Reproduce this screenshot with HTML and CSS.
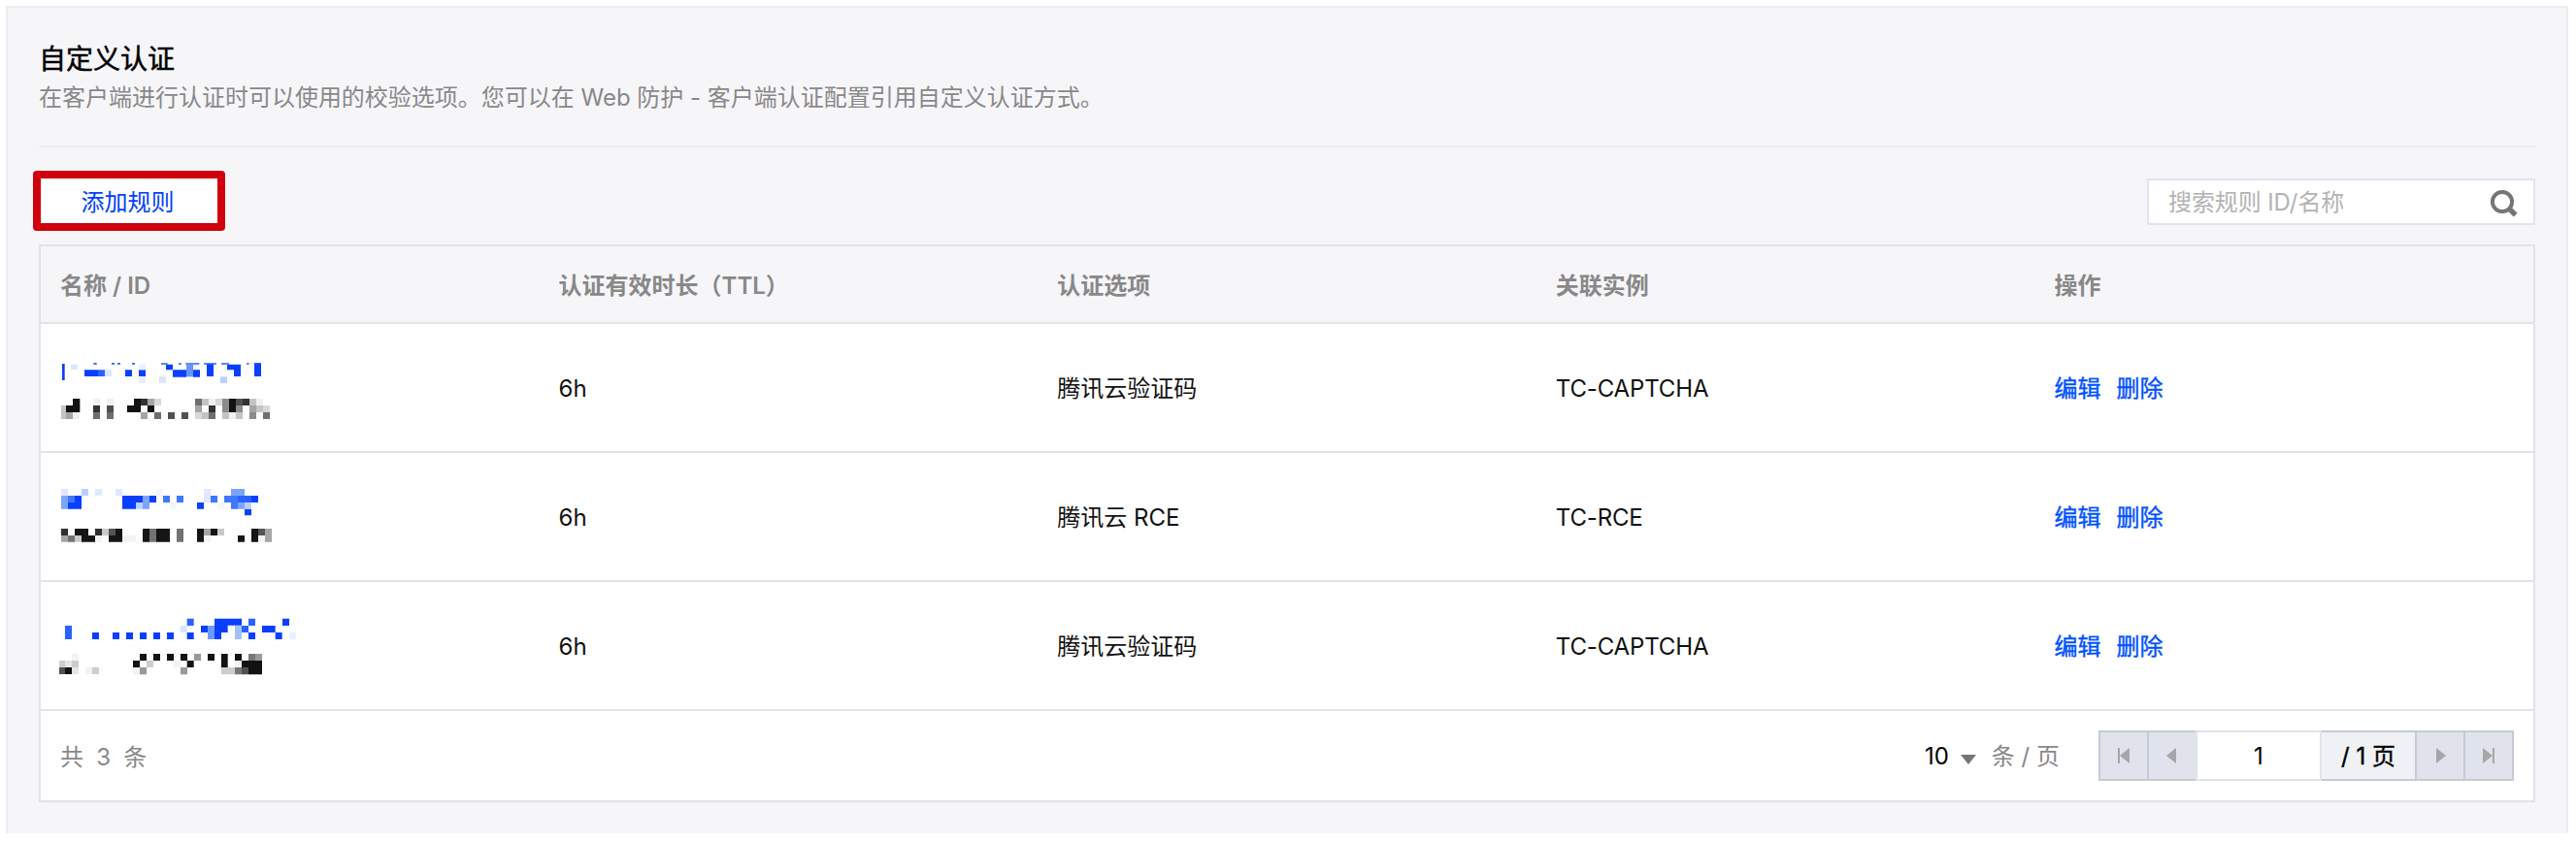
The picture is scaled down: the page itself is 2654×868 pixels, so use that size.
FILE: index.html
```html
<!DOCTYPE html>
<html lang="zh-CN">
<head>
<meta charset="utf-8">
<title>自定义认证</title>
<link rel="stylesheet" href="styles.css">
</head>
<body>
<section class="panel">
  <header class="panel-head">
    <h1 class="title">自定义认证</h1>
    <p class="subtitle">在客户端进行认证时可以使用的校验选项。您可以在 <span class="web">Web</span> 防护 <span class="dash">-</span> 客户端认证配置引用自定义认证方式。</p>
  </header>
  <div class="toolbar">
    <button class="add" type="button"><span class="add-label">添加规则</span></button>
    <div class="search">
      <span class="placeholder">搜索规则 ID/名称</span>
      <svg class="search-icon" viewBox="0 0 28 28"><circle cx="12" cy="12" r="10.1" fill="none" stroke="#757575" stroke-width="4"/><path d="M18.5 18.5l7.2 7.2" stroke="#757575" stroke-width="5.4"/></svg>
    </div>
  </div>
  <div class="table">
    <div class="row head">
      <div class="cell">名称 / ID</div><div class="cell">认证有效时长（TTL）</div><div class="cell">认证选项</div><div class="cell">关联实例</div><div class="cell">操作</div>
    </div>
    <div class="row">
      <div class="cell masked">
        <svg class="mosaic" viewBox="30 -78 780 393">
          <path fill="#0a3fff" d="M42 45h8v51h-8zM111 64h42v20h-42zM237 64h21v20h-21zM279 64h21v20h-21zM363 47h21v17h-21zM384 64h42v22h-42zM447 64h21v22h-21zM489 45h21v39h-21zM552 47h42v17h-42zM573 64h21v20h-21zM636 45h21v39h-21z"/>
          <path fill="#2b62ff" d="M153 64h21v20h-21zM139 42h10v5h-10zM195 42h9v5h-9zM213 42h9v5h-9zM258 42h9v5h-9zM348 43h20v4h-20zM402 43h9v4h-9zM424 43h42v4h-42zM480 43h39v4h-39zM534 43h24v4h-24zM612 43h8v4h-8zM635 42h22v4h-22z"/>
          <path fill="#dbe6ff" d="M69 47h21v16h-21zM174 64h21v20h-21zM342 84h21v21h-21z"/>
          <path fill="#e9f0ff" d="M279 47h21v17h-21zM279 86h21v19h-21z"/>
          <path fill="#6695ff" d="M426 47h21v38h-21z"/><path fill="#bdd1ff" d="M531 85h21v20h-21z"/>
          <path fill="#121212" d="M75 153h22v21h-22zM54 174h43v21h-43zM264 153h22v21h-22zM243 174h42v21h-42zM306 174h21v21h-21zM558 153h21v42h-21z"/>
          <path fill="#333" d="M285 153h21v21h-21zM138 174h21v21h-21zM495 174h21v21h-21zM600 153h21v21h-21z"/>
          <path fill="#505050" d="M180 174h21v21h-21zM369 195h21v21h-21zM411 195h21v21h-21zM579 153h21v21h-21z"/>
          <path fill="#6e6e6e" d="M138 195h21v21h-21zM180 195h21v21h-21zM327 195h21v21h-21zM453 153h21v21h-21zM495 195h21v21h-21zM663 195h21v21h-21z"/>
          <path fill="#8b8b8b" d="M537 153h21v42h-21zM579 174h21v21h-21zM621 195h21v21h-21z"/>
          <path fill="#a5a5a5" d="M54 195h21v21h-21zM306 153h21v21h-21zM285 195h21v21h-21zM453 174h21v21h-21zM621 174h21v21h-21z"/>
          <path fill="#c4c4c4" d="M39 174h15v42h-15zM474 153h21v21h-21zM474 195h21v21h-21zM537 195h21v21h-21zM579 195h21v21h-21zM621 153h21v21h-21zM642 174h21v21h-21z"/>
          <path fill="#d8d8d8" d="M327 153h21v21h-21zM453 195h21v21h-21zM516 153h21v21h-21zM663 174h21v21h-21z"/>
          <path fill="#f0f0f0" d="M75 195h21v21h-21zM138 153h21v21h-21zM180 153h21v21h-21zM495 153h21v21h-21zM558 195h21v21h-21zM642 153h21v21h-21z"/>
        </svg>
      </div>
      <div class="cell">6h</div><div class="cell">腾讯云验证码</div><div class="cell code">TC-CAPTCHA</div><div class="cell links"><a>编辑</a><a>删除</a></div>
    </div>
    <div class="row">
      <div class="cell masked">
        <svg class="mosaic" viewBox="30 -69 780 393">
          <path fill="#0a3fff" d="M81 63h21v41h-21zM60 84h21v20h-21zM228 63h63v21h-63zM228 84h42v20h-42zM312 63h21v21h-21zM459 84h21v20h-21zM606 104h21v20h-21zM627 63h21v21h-21z"/>
          <path fill="#4077ff" d="M60 63h21v21h-21zM354 63h21v21h-21zM396 63h21v21h-21zM501 63h21v21h-21zM543 63h42v21h-42zM564 84h21v20h-21z"/>
          <path fill="#2b62ff" d="M585 63h42v21h-42z"/>
          <path fill="#7ba3ff" d="M39 63h21v41h-21zM291 63h21v41h-21zM564 42h42v21h-42zM585 84h21v20h-21z"/>
          <path fill="#bacfff" d="M102 42h21v21h-21zM270 84h21v20h-21zM606 84h21v20h-21z"/>
          <path fill="#dfe8ff" d="M39 42h21v21h-21zM144 42h21v21h-21zM207 42h21v21h-21zM480 42h21v42h-21z"/>
          <path fill="#f3f6ff" d="M333 42h21v21h-21zM375 84h21v20h-21zM522 84h21v20h-21z"/>
          <path fill="#151515" d="M81 165h42v21h-42zM102 186h42v20h-42zM207 165h21v41h-21zM186 186h21v20h-21zM291 165h21v41h-21zM333 165h42v41h-42zM459 165h21v41h-21zM501 165h21v21h-21zM585 186h21v20h-21zM627 165h21v41h-21z"/>
          <path fill="#303030" d="M39 165h21v21h-21zM144 165h21v21h-21z"/>
          <path fill="#555" d="M186 165h21v21h-21zM648 165h21v21h-21z"/>
          <path fill="#727272" d="M60 186h21v20h-21zM312 165h21v41h-21zM396 165h21v41h-21z"/>
          <path fill="#a5a5a5" d="M39 186h21v20h-21zM480 165h21v21h-21zM669 165h21v41h-21z"/>
          <path fill="#cacaca" d="M81 186h21v20h-21zM165 165h21v21h-21zM522 165h21v21h-21z"/>
          <path fill="#f3f3f3" d="M144 186h21v20h-21zM228 186h42v20h-42zM480 186h21v20h-21zM648 186h21v20h-21z"/>
        </svg>
      </div>
      <div class="cell">6h</div><div class="cell">腾讯云 RCE</div><div class="cell code">TC-RCE</div><div class="cell links"><a>编辑</a><a>删除</a></div>
    </div>
    <div class="row">
      <div class="cell masked">
        <svg class="mosaic" viewBox="30 -60 780 393">
          <path fill="#0a3fff" d="M135 96h21v21h-21zM198 96h21v21h-21zM240 96h21v21h-21zM282 96h21v21h-21zM324 96h21v21h-21zM366 96h21v21h-21zM428 96h21v21h-21zM471 75h21v21h-21zM513 53h84v21h-84zM513 74h41v22h-41zM513 96h21v21h-21zM618 96h21v21h-21zM660 75h41v21h-41zM701 96h21v21h-21zM723 53h21v22h-21z"/>
          <path fill="#2b62ff" d="M51 75h21v42h-21zM428 53h21v22h-21zM597 75h21v21h-21zM618 53h21v22h-21z"/>
          <path fill="#6e99ff" d="M492 75h21v42h-21z"/><path fill="#a4c0ff" d="M576 75h21v42h-21z"/>
          <path fill="#d9e5ff" d="M407 75h21v21h-21z"/><path fill="#e8efff" d="M744 96h21v21h-21z"/>
          <path fill="#121212" d="M282 162h21v21h-21zM324 162h21v21h-21zM366 162h21v21h-21zM408 162h21v21h-21zM261 183h21v21h-21zM428 183h21v21h-21zM492 162h21v21h-21zM534 162h20v42h-20zM576 162h21v21h-21zM597 183h63v21h-63zM618 204h42v22h-42zM51 204h21v21h-21z"/>
          <path fill="#505050" d="M33 204h18v21h-18zM597 204h21v22h-21z"/>
          <path fill="#777" d="M618 162h21v21h-21zM576 204h21v22h-21z"/>
          <path fill="#999" d="M282 204h21v22h-21zM450 162h21v21h-21zM639 162h21v21h-21zM408 204h21v22h-21z"/>
          <path fill="#cdcdcd" d="M33 183h18v21h-18zM72 183h21v21h-21zM135 204h21v21h-21zM303 183h21v21h-21zM534 204h42v22h-42z"/>
          <path fill="#e5e5e5" d="M51 183h21v21h-21zM72 204h21v21h-21z"/>
          <path fill="#f3f3f3" d="M72 162h21v21h-21zM114 204h21v21h-21zM261 204h21v22h-21zM387 183h21v21h-21zM576 183h21v21h-21z"/>
        </svg>
      </div>
      <div class="cell">6h</div><div class="cell">腾讯云验证码</div><div class="cell code">TC-CAPTCHA</div><div class="cell links"><a>编辑</a><a>删除</a></div>
    </div>
    <footer class="foot">
      <span class="total">共 3 条</span>
      <div class="size">
        <span class="count">10</span>
        <svg class="caret" viewBox="0 0 16 10"><path d="M0 0h16l-8 10z" fill="#757575"/></svg>
        <span class="unit">条 / 页</span>
      </div>
      <div class="pager">
        <span class="btn first"><svg class="glyph" viewBox="0 0 12 16"><path d="M0 0h2v16H0zM12 0v16L2 8z" fill="#a6a6a9"/></svg></span>
        <span class="btn prev"><svg class="glyph" viewBox="0 0 12 16"><path d="M10 0v16L0 8z" fill="#a6a6a9"/></svg></span>
        <span class="page">1</span>
        <span class="pages">/ 1 页</span>
        <span class="btn"><svg class="glyph" viewBox="0 0 12 16"><path d="M2 0v16l10-8z" fill="#a6a6a9"/></svg></span>
        <span class="btn"><svg class="glyph" viewBox="0 0 12 16"><path d="M0 0v16l10-8zM10 0h2v16h-2z" fill="#a6a6a9"/></svg></span>
      </div>
    </footer>
  </div>
</section>
</body>
</html>
```
FILE: styles.css
```css
* { box-sizing: border-box; }
body {
  margin: 0;
  padding: 6px 8px 0 6px;
  background: #fff;
  color: #000;
  font: 24px/36px Inter, "Noto Sans CJK SC", sans-serif;
}
.panel {
  height: 853px;
  padding: 0 32px;
  background: #f6f6f9;
  border: 2px solid #ebecf0;
  border-bottom: 0;
}
.panel-head { height: 144px; padding-top: 31px; border-bottom: 2px solid #ebebf2; }
.title { margin: 0; font-size: 28px; font-weight: 400; line-height: 44px; -webkit-text-stroke: 0.5px #000; }
.subtitle { margin: 0; color: #888; line-height: 36px; white-space: nowrap; letter-spacing: -0.01px; }
.toolbar { display: flex; justify-content: space-between; height: 100px; }
.add {
  width: 198px;
  height: 62px;
  margin: 24px 0 0 -6px;
  padding: 0;
  background: #fff;
  border: 8px solid #d0000e;
  border-radius: 4px;
  color: #0040ff;
  font: inherit;
}
.add-label { display: block; padding: 3px 3px 0 0; }
.search {
  display: flex;
  align-items: center;
  justify-content: space-between;
  width: 400px;
  height: 48px;
  margin-top: 32px;
  padding: 0 16px 0 20px;
  background: #fff;
  border: 2px solid #e0e4ec;
}
.placeholder { padding-top: 2px; color: #b3b3b3; letter-spacing: -0.1px; }
.search-icon { width: 28px; height: 28px; margin-top: 3px; }
.table { background: #fff; border: 2px solid #dfe3ea; }
.row {
  display: grid;
  grid-template-columns: repeat(5, 1fr);
  height: 133px;
  border-bottom: 2px solid #dfe3ea;
}
.cell { display: flex; align-items: center; padding: 2px 0 0 20px; color: #111; }
.head { height: 80px; background: #f6f6f9; }
.head .cell { padding-top: 3px; color: #888; font-weight: 600; }
.masked { padding: 0 0 0 18px; }
.code { letter-spacing: -0.15px; }
.mosaic { width: 260px; height: 131px; }
.links { gap: 16px; padding-top: 3px; }
.links a { color: #0052ff; -webkit-text-stroke: 0.4px #0052ff; }
.foot { display: flex; align-items: center; height: 92px; padding: 0 20px; }
.total { flex: 1; padding-top: 3px; color: #888; word-spacing: 6.5px; }
.size { display: flex; align-items: center; margin-right: 40px; padding-top: 2px; }
.caret { width: 16px; height: 10px; margin: 5px 16px 0 12px; }
.unit { color: #888; }
.pager { display: flex; width: 428px; height: 52px; }
.btn {
  display: flex;
  align-items: center;
  justify-content: center;
  width: 50px;
  background: #e0e3eb;
  border: 2px solid #c4cad7;
  border-left: 0;
}
.first { width: 52px; border-left: 2px solid #c4cad7; }
.prev { width: 48px; border-right: 0; }
.glyph { width: 12px; height: 16px; }
.page {
  width: 130px;
  border: 2px solid #e0e3eb;
  text-align: center;
  line-height: 50px;
}
.pages {
  flex: 1;
  background: #eff1f5;
  border: 2px solid #c4cad7;
  border-left: 0;
  text-align: center;
  line-height: 50px;
  -webkit-text-stroke: 0.4px #000;
}
```
